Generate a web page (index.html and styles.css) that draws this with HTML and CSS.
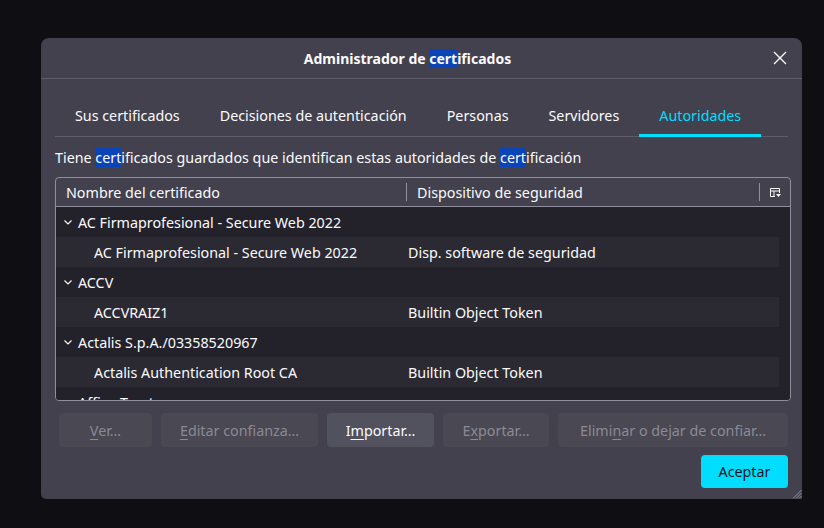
FILE: index.html
```html
<!DOCTYPE html>
<html lang="es">
<head>
<meta charset="utf-8">
<title>Administrador de certificados</title>
<link rel="stylesheet" href="styles.css">
</head>
<body>
<div class="screen">
  <div class="dialog">
    <header class="titlebar">
      <h1 class="title">Administrador de <mark class="hl">cert</mark>ificados</h1>
      <button class="close" aria-label="Cerrar">
        <svg width="14" height="14" viewBox="0 0 14 14"><path d="M1 1L13 13M13 1L1 13" stroke="#fbfbfe" stroke-width="1.4" fill="none"/></svg>
      </button>
    </header>
    <div class="content">
      <nav class="tabs">
        <div class="tab">Sus certificados</div>
        <div class="tab">Decisiones de autenticación</div>
        <div class="tab">Personas</div>
        <div class="tab">Servidores</div>
        <div class="tab active">Autoridades</div>
      </nav>
      <p class="desc">Tiene <mark class="hl">cert</mark>ificados guardados que identifican estas autoridades de <mark class="hl">cert</mark>ificación</p>
      <div class="tree">
        <div class="tree-head">
          <div class="col col-name">Nombre del certificado</div>
          <div class="splitter"></div>
          <div class="col col-dev">Dispositivo de seguridad</div>
          <div class="splitter"></div>
          <div class="picker">
            <svg width="11" height="10" viewBox="0 0 11 10"><path d="M0.5 0.5H9.5V5M0.5 0.5V8.5H5M0.5 3H9.5M4 3V8.5" stroke="#fbfbfe" stroke-width="1" fill="none"/><path d="M6 6H11L8.5 9Z" fill="#fbfbfe"/></svg>
          </div>
        </div>
        <div class="tree-body">
          <div class="row parent"><span class="chev"><svg width="8" height="5" viewBox="0 0 8 5"><path d="M0.5 0.5L4 4L7.5 0.5" stroke="#fbfbfe" stroke-width="1.1" fill="none"/></svg></span><span class="name">AC Firmaprofesional - Secure Web 2022</span></div>
          <div class="row child"><span class="name">AC Firmaprofesional - Secure Web 2022</span><span class="dev">Disp. software de seguridad</span></div>
          <div class="row parent"><span class="chev"><svg width="8" height="5" viewBox="0 0 8 5"><path d="M0.5 0.5L4 4L7.5 0.5" stroke="#fbfbfe" stroke-width="1.1" fill="none"/></svg></span><span class="name">ACCV</span></div>
          <div class="row child"><span class="name">ACCVRAIZ1</span><span class="dev">Builtin Object Token</span></div>
          <div class="row parent"><span class="chev"><svg width="8" height="5" viewBox="0 0 8 5"><path d="M0.5 0.5L4 4L7.5 0.5" stroke="#fbfbfe" stroke-width="1.1" fill="none"/></svg></span><span class="name">Actalis S.p.A./03358520967</span></div>
          <div class="row child"><span class="name">Actalis Authentication Root CA</span><span class="dev">Builtin Object Token</span></div>
          <div class="row parent"><span class="chev"><svg width="8" height="5" viewBox="0 0 8 5"><path d="M0.5 0.5L4 4L7.5 0.5" stroke="#fbfbfe" stroke-width="1.1" fill="none"/></svg></span><span class="name">AffirmTrust</span></div>
        </div>
      </div>
      <div class="actions">
        <button class="btn disabled b-ver"><u>V</u>er…</button>
        <button class="btn disabled b-edit"><u>E</u>ditar confianza…</button>
        <button class="btn b-imp">I<u>m</u>portar…</button>
        <button class="btn disabled b-exp">E<u>x</u>portar…</button>
        <button class="btn disabled b-del">Elimi<u>n</u>ar o dejar de confiar…</button>
      </div>
      <div class="footer">
        <button class="btn primary">Aceptar</button>
      </div>
    </div>
    <svg class="grip" width="10" height="10" viewBox="0 0 10 10"><path d="M9.5 1L1 9.5M9.5 4L4 9.5M9.5 7L7 9.5" stroke="#8f8f9d" stroke-width="1" fill="none"/></svg>
  </div>
</div>
</body>
</html>
```
FILE: styles.css
```css
html, body {
  margin: 0;
  padding: 0;
  background: #0f0e13;
}
body {
  font-family: "Noto Sans", "Open Sans", sans-serif;
  font-size: 14.3px;
  color: #fbfbfe;
  width: 824px;
  height: 528px;
  overflow: hidden;
}
.screen {
  padding: 38px 0 0 41px;
}
.dialog {
  position: relative;
  width: 761px;
  height: 461px;
  box-sizing: border-box;
  background: #42414d;
  border-radius: 8px 8px 0 5px;
  display: flex;
  flex-direction: column;
}
.titlebar {
  height: 40px;
  border-bottom: 1px solid #5e5d69;
  display: flex;
  align-items: center;
  padding-right: 7px;
}
.title {
  flex: 1;
  margin: 0;
  text-align: center;
  font-size: 14px;
  font-weight: 700;
  padding: 1px 0 0 9px;
}
.hl {
  background: #0a44b6;
  color: #fbfbfe;
}
.close {
  width: 30px;
  height: 30px;
  border: 0;
  background: transparent;
  padding: 0;
  display: flex;
  align-items: center;
  justify-content: center;
}
.content {
  padding: 0 14px;
  display: flex;
  flex-direction: column;
}
.tabs {
  margin-top: 12px;
  display: flex;
  border-bottom: 1px solid #5e5d69;
}
.tab {
  height: 46px;
  padding: 5px 20px 0;
  display: flex;
  align-items: center;
  box-sizing: border-box;
  margin-bottom: -1px;
  border-bottom: 3px solid transparent;
  white-space: nowrap;
}
.tab.active {
  color: #00ddff;
  border-bottom-color: #00ddff;
}
.desc {
  margin: 11px 0 0;
  line-height: 20px;
}
.tree {
  margin: 9px -3px 0 0;
  height: 224px;
  box-sizing: border-box;
  border: 1px solid #8f8f9d;
  border-radius: 4px;
  display: flex;
  flex-direction: column;
  overflow: hidden;
}
.tree-head {
  height: 29px;
  flex: none;
  box-sizing: border-box;
  border-bottom: 1px solid #8f8f9d;
  display: flex;
  align-items: center;
}
.col-name {
  width: 350px;
  padding-left: 10px;
  box-sizing: border-box;
}
.col-dev {
  width: 352px;
  padding-left: 10px;
  box-sizing: border-box;
}
.splitter {
  width: 1px;
  height: 18px;
  background: #8f8f9d;
}
.picker {
  flex: 1;
  display: flex;
  justify-content: center;
  padding-top: 2px;
}
.tree-body {
  flex: 1;
  background: #23222b;
  overflow: hidden;
  padding-right: 11px;
}
.row {
  height: 30px;
  display: flex;
  align-items: center;
  white-space: nowrap;
}
.row.child {
  background: #2b2a33;
}
.chev {
  width: 22px;
  display: flex;
  justify-content: flex-end;
  padding-right: 6px;
  box-sizing: border-box;
  padding-top: 1px;
}
.row.child .name {
  width: 352px;
  padding-left: 38px;
  box-sizing: border-box;
}
.actions {
  margin-top: 12px;
  padding-left: 4px;
  display: flex;
  gap: 9px;
}
.btn {
  font: inherit;
  height: 34px;
  border: 0;
  border-radius: 4px;
  background: #52515e;
  color: #fbfbfe;
  padding: 0 15px;
  white-space: nowrap;
}
.btn u {
  text-underline-offset: 3px;
}
.btn.disabled {
  background: #494853;
  color: #8b8a95;
}
.b-ver { width: 93px; }
.b-edit { width: 157px; }
.b-imp { width: 107px; }
.b-exp { width: 106px; }
.b-del { flex: 1; }
.footer {
  margin-top: 8px;
  display: flex;
  justify-content: flex-end;
}
.btn.primary {
  width: 87px;
  height: 33px;
  background: #00ddff;
  color: #15141a;
}
.grip {
  position: absolute;
  right: 0;
  bottom: 0;
}
```
